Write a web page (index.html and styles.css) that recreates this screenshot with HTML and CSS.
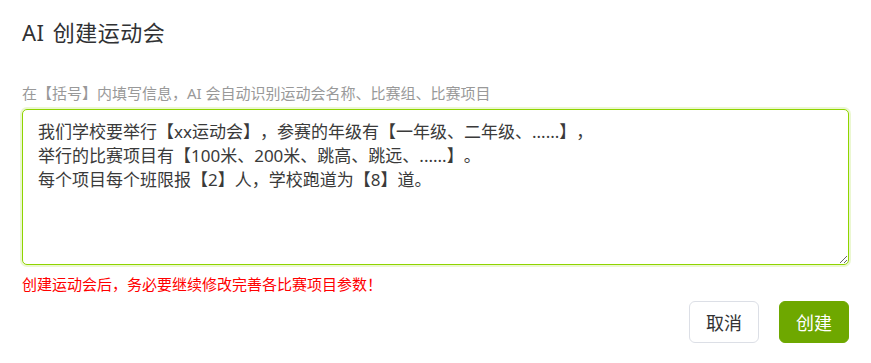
FILE: index.html
```html
<!DOCTYPE html>
<html lang="zh-CN">
<head>
<meta charset="utf-8">
<title>AI 创建运动会</title>
<link rel="stylesheet" href="styles.css">
</head>
<body>
<div class="dialog">
  <div class="dialog-header">
    <h2 class="dialog-title">AI 创建运动会</h2>
  </div>
  <div class="dialog-body">
    <p class="hint">在【括号】内填写信息，AI 会自动识别运动会名称、比赛组、比赛项目</p>
    <textarea class="prompt">我们学校要举行【xx运动会】，参赛的年级有【一年级、二年级、......】，
举行的比赛项目有【100米、200米、跳高、跳远、......】。
每个项目每个班限报【2】人，学校跑道为【8】道。</textarea>
    <p class="warn">创建运动会后，务必要继续修改完善各比赛项目参数！</p>
  </div>
  <div class="dialog-footer">
    <button class="btn btn-default" type="button">取消</button>
    <button class="btn btn-primary" type="button">创建</button>
  </div>
</div>
</body>
</html>
```
FILE: styles.css
```css
html, body {
  margin: 0;
  padding: 0;
  background: #ffffff;
}

body {
  font-family: "Noto Sans", "Noto Sans CJK SC", sans-serif;
  color: #333333;
  text-spacing-trim: space-all;
}

.dialog {
  width: 827px;
  padding: 0 22px;
}

.dialog-header {
  padding-top: 17px;
}

.dialog-title {
  margin: 0;
  font-size: 22px;
  font-weight: 400;
  line-height: 30px;
  color: #303133;
  letter-spacing: 0.5px;
  word-spacing: 2px;
}

.dialog-body {
  padding-top: 36px;
}

.hint {
  margin: 0 0 6px 0;
  font-size: 15px;
  line-height: 20px;
  color: #999999;
}

.prompt {
  display: block;
  box-sizing: border-box;
  width: 100%;
  height: 156px;
  margin: 0;
  padding: 10px 15px;
  font-family: "Noto Sans", "Noto Sans CJK SC", sans-serif;
  font-size: 17px;
  line-height: 24px;
  color: #3a3a3a;
  border: 1px solid #8fd400;
  border-radius: 5px;
  box-shadow: 0 0 0 2px rgba(143, 212, 0, 0.18);
  outline: none;
  resize: vertical;
  text-spacing-trim: space-all;
}

.warn {
  margin: 9px 0 0 0;
  font-size: 15px;
  line-height: 20px;
  color: #ff0000;
}

.dialog-footer {
  display: flex;
  justify-content: flex-end;
  gap: 20px;
  padding-top: 7px;
}

.btn {
  box-sizing: border-box;
  width: 70px;
  height: 42px;
  padding: 0;
  font-family: "Noto Sans", "Noto Sans CJK SC", sans-serif;
  font-size: 18px;
  border-radius: 6px;
  cursor: pointer;
}

.btn-default {
  background: #ffffff;
  color: #333333;
  border: 1px solid #dcdfe6;
}

.btn-primary {
  background: #6ea800;
  color: #ffffff;
  border: 1px solid #6ea800;
}
```
